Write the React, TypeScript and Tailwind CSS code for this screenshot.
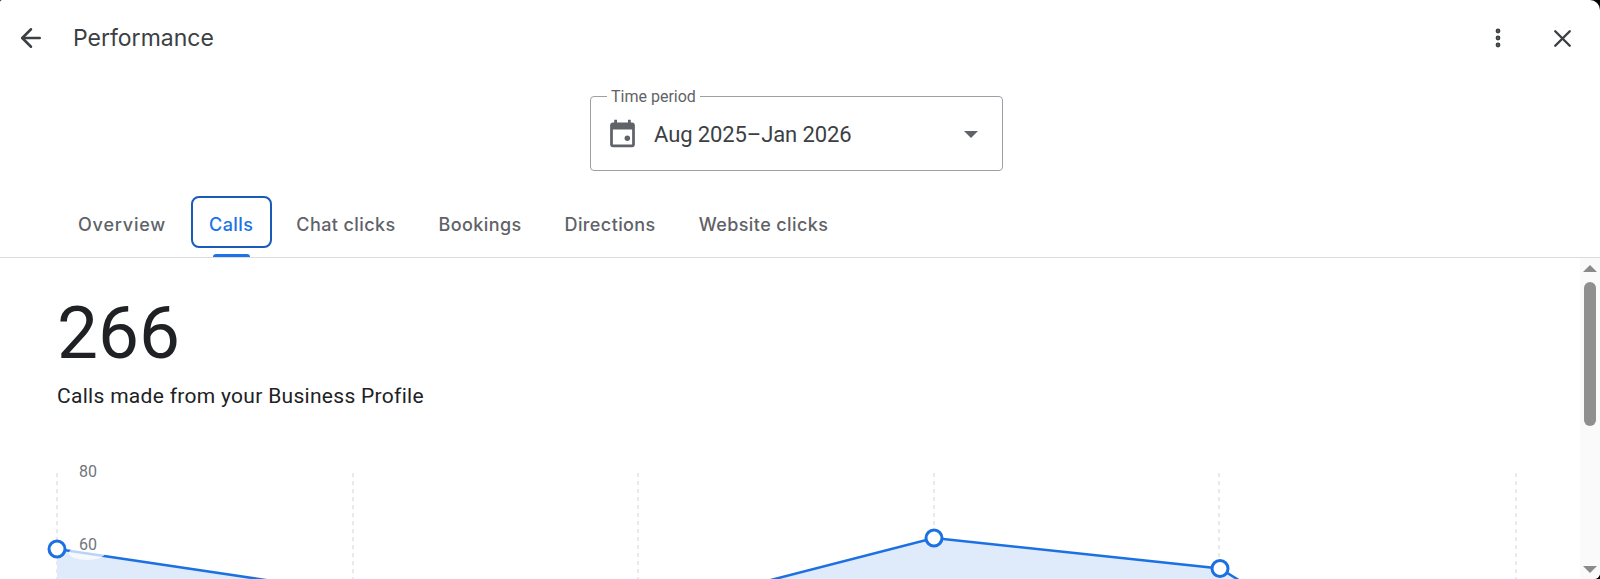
import { ArrowLeft, EllipsisVertical, X } from "lucide-react";

const tabs = ["Overview", "Calls", "Chat clicks", "Bookings", "Directions", "Website clicks"];
const gridX = [57, 353, 638, 934, 1219, 1516];

function CalendarIcon() {
    return (
        <svg width="33" height="33" viewBox="0 0 24 24" fill="#5f6368" className="-mt-[2px]">
            <path d="M19 4h-1V2h-2v2H8V2H6v2H5c-1.1 0-2 .9-2 2v14c0 1.1.9 2 2 2h14c1.1 0 2-.9 2-2V6c0-1.1-.9-2-2-2zm0 16H5V9h14v11z" />
            <circle cx="15.5" cy="15.5" r="2" />
        </svg>
    );
}

function Chart() {
    return (
        <svg width="1580" height="122" viewBox="0 457 1580 122" className="block">
            {gridX.map((x) => (
                <line key={x} x1={x} x2={x} y1="473" y2="579" stroke="#d2d4d7" strokeDasharray="4 4" />
            ))}
            <path d="M57 549 L400 600 L693 600 L934 538 L1220 568.5 L1271 600 L57 600 Z" fill="#dfeafb" />
            <path d="M57 549 L400 600 M693 600 L934 538 L1220 568.5 L1271 600" fill="none" stroke="#1c71e2" strokeWidth="2.5" />
            {/* label halo washes out the line under "60" */}
            <ellipse cx="87" cy="553" rx="18" ry="7" fill="#ffffff" opacity="0.7" />
            <text x="79" y="477" fill="#70757a" fontSize="16" fontFamily="Roboto, sans-serif">80</text>
            <text x="79" y="550" fill="#70757a" fontSize="16" fontFamily="Roboto, sans-serif">60</text>
            {[[57, 549], [934, 538], [1220, 568.5]].map(([cx, cy]) => (
                <circle key={cx} cx={cx} cy={cy} r="8" fill="#ffffff" stroke="#1c71e2" strokeWidth="3" />
            ))}
        </svg>
    );
}

export default function App() {
    return (
        <div className="h-[579px] w-full overflow-hidden bg-black font-['Roboto',sans-serif]">
            <div className="flex h-full flex-col overflow-hidden rounded-tl-[2px] rounded-tr-[10px] rounded-br-[6px] bg-white">
                {/* Header */}
                <header className="flex h-[76px] shrink-0 items-center pl-[16px] pr-[23px] text-[#3c4043]">
                    <ArrowLeft size={30} strokeWidth={2} />
                    <h1 className="ml-[27px] font-['Inter',sans-serif] text-[23px] text-[#3c4043]">Performance</h1>
                    <EllipsisVertical size={24} strokeWidth={2.8} className="ml-auto" />
                    <X size={29} strokeWidth={2} className="ml-[38px]" />
                </header>

                {/* Time period */}
                <div className="flex shrink-0 justify-center pr-[7px]">
                    <fieldset className="mt-[11px] flex h-[84px] w-[413px] items-center rounded-[4px] border border-[#9aa0a6] pl-[15px] pr-[24px] pb-[6px]">
                        <legend className="relative top-[1px] ml-[1px] px-[4px] text-[16px] leading-[18px] text-[#5f6368]">Time period</legend>
                        <CalendarIcon />
                        <span className="ml-[15px] text-[22px] tracking-[-0.1px] text-[#3c4043]">Aug 2025–Jan 2026</span>
                        <span className="ml-auto h-0 w-0 border-x-[7px] border-t-[7px] border-x-transparent border-t-[#5f6368]" />
                    </fieldset>
                </div>

                {/* Tabs */}
                <nav className="mt-[18px] flex h-[69px] shrink-0 border-b border-[#dadce0] pl-[56.5px]">
                    {tabs.map((tab) => (
                        <div
                            key={tab}
                            className={`relative flex items-center px-[21.5px] pt-[2px] font-['Inter',sans-serif] text-[18px] font-medium ${tab === "Overview" ? "tracking-[0.8px]" : "tracking-[0.4px]"} ${tab === "Calls" ? "text-[#1a73e8]" : "text-[#5f6368]"}`}
                        >
                            {tab}
                            {tab === "Calls" && (
                                <>
                                    <span className="absolute inset-x-[3px] top-[7px] bottom-[9px] rounded-[8px] border-[2.5px] border-[#1a5ab8]" />
                                    <span className="absolute bottom-0 left-[25px] h-[3px] w-[37px] rounded-t-[3px] bg-[#1a73e8]" />
                                </>
                            )}
                        </div>
                    ))}
                </nav>

                {/* Body */}
                <div className="relative flex min-h-0 flex-1">
                    <main className="min-w-0 flex-1 overflow-hidden">
                        <div className="pl-[57px] pt-[35px] text-[#202124]">
                            <div className="text-[73px] leading-[80px]">266</div>
                            <p className="mt-[10px] text-[21px] leading-[26px] tracking-[0.3px]">Calls made from your Business Profile</p>
                        </div>
                        <div className="mt-[48px]">
                            <Chart />
                        </div>
                    </main>
                    <aside className="flex w-[20px] shrink-0 flex-col items-center bg-[#fafafa] text-[#8a8a8a]">
                        <span className="mt-[7px] h-0 w-0 border-x-[7px] border-b-[7px] border-x-transparent border-b-[#8a8a8a]" />
                        <span className="mt-[10px] h-[144px] w-[12px] rounded-[6px] bg-[#8f8f8f]" />
                        <span className="mt-auto mb-[6px] h-0 w-0 border-x-[7px] border-t-[7px] border-x-transparent border-t-[#8a8a8a]" />
                    </aside>
                </div>
            </div>
        </div>
    );
}
